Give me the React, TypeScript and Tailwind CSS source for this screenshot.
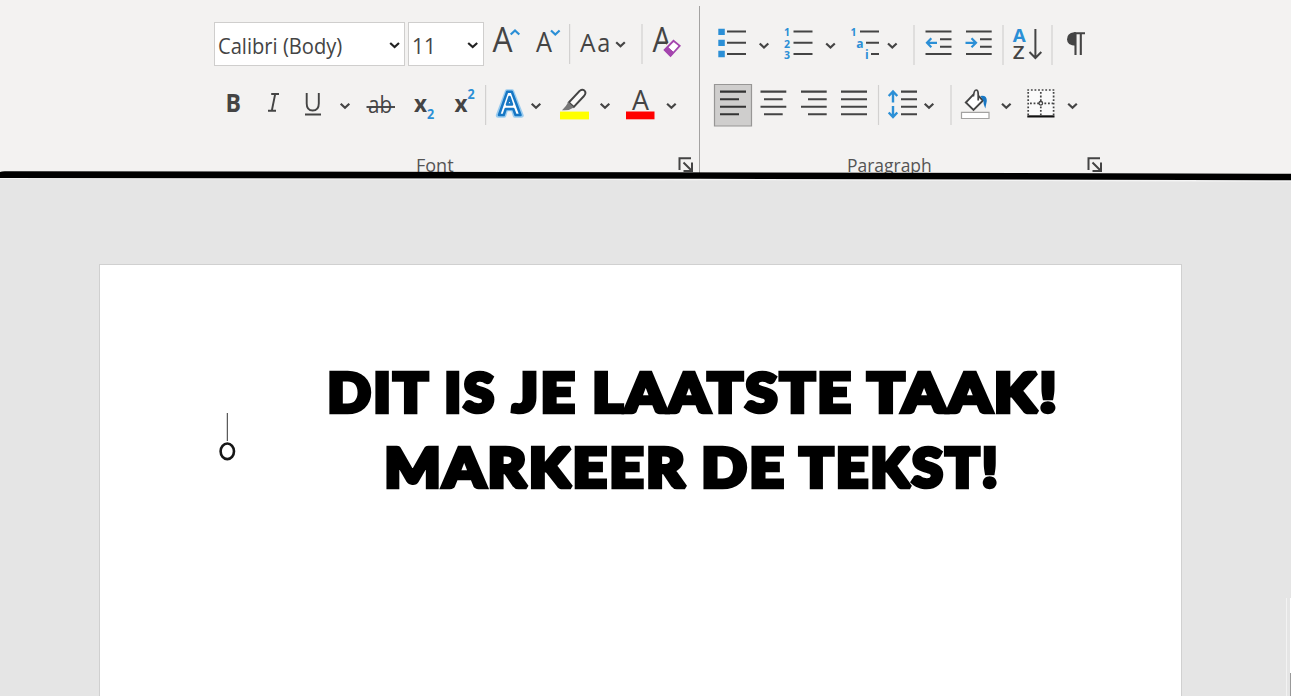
import type { ReactNode } from 'react';

const INK = '#444444';
const BLUE = '#2b8fd6';

// Each glyph is drawn in ribbon coordinates; x/w select its slice of the row.
function Glyph({ x, w, y, children }: { x: number; w: number; y: number; children?: ReactNode }) {
  return (
    <svg
      width={w}
      height={44}
      viewBox={`${x} ${y} ${w} 44`}
      className="block shrink-0 overflow-visible"
      fill="none"
      stroke={INK}
      strokeWidth={1.9}
      fontFamily="'Open Sans', 'Noto Sans', sans-serif"
    >
      {children}
    </svg>
  );
}

function Chevron({ x, y, color = INK, up = false }: { x: number; y: number; color?: string; up?: boolean }) {
  const d = up ? -2 : 2;
  return <path d={`M${x - 4.3} ${y - d}L${x} ${y + d}L${x + 4.3} ${y - d}`} stroke={color} strokeWidth={2.2} />;
}

function T({ x, y, s, l, c = INK, weight = 400, italic = false, children }: {
  x: number; y: number; s: number; l?: number; c?: string; weight?: number; italic?: boolean; children: string;
}) {
  return (
    <text x={x} y={y} fontSize={s} fill={c} stroke="none" fontWeight={weight} fontStyle={italic ? 'italic' : 'normal'}
      textLength={l} lengthAdjust="spacingAndGlyphs">
      {children}
    </text>
  );
}

function Sep({ x, y }: { x: number; y: number }) {
  return <path d={`M${x} ${y}v40`} stroke="#d2d1d0" strokeWidth={1.2} />;
}

function Lines({ rows }: { rows: [number, number, number][] }) {
  return <path d={rows.map(([a, b, y]) => `M${a} ${y}H${b}`).join('')} strokeWidth={2.1} />;
}

function Launcher() {
  return (
    <svg width="16" height="16" viewBox="0 0 16 16" fill="none" stroke={INK} strokeWidth="2" className="block shrink-0">
      <path d="M1.5 13V1.2H13M5.5 5.5L13 13M14 5.5V14H5.5" />
    </svg>
  );
}

function FontGroup() {
  return (
    <section className="flex h-full w-[485px] shrink-0 flex-col pt-[22px]">
      <div className="flex h-11">
        <div className="flex w-[191px] items-center justify-between border border-[#cfcecd] bg-white pt-[2px] pl-[3px] text-[#444]">
          <span className="origin-left scale-x-[0.915] whitespace-nowrap text-[22px] leading-none">Calibri (Body)</span>
          <svg width="20" height="20" viewBox="0 0 20 20" fill="none" className="-ml-6 shrink-0">
            <path d="M6.2 8L10.6 12L15 8" stroke="#222" strokeWidth="2.2" />
          </svg>
        </div>
        <div className="ml-[3px] flex w-[76px] items-center justify-between border border-[#cfcecd] bg-white pt-[2px] pl-[3px] text-[#444]">
          <span className="origin-left scale-x-95 text-[22px] leading-none">11</span>
          <svg width="20" height="20" viewBox="0 0 20 20" fill="none" className="shrink-0">
            <path d="M5.2 8L9.7 12L14.2 8" stroke="#222" strokeWidth="2.2" />
          </svg>
        </div>
        <Glyph x={484} w={44} y={22}>
          <T x={492.5} y={52} s={34} l={20}>A</T>
          <Chevron x={515} y={32.5} color={BLUE} up />
        </Glyph>
        <Glyph x={528} w={38} y={22}>
          <T x={536} y={52} s={27} l={16}>A</T>
          <Chevron x={555.3} y={32.5} color={BLUE} />
        </Glyph>
        <Glyph x={566} w={7} y={22}><Sep x={569.6} y={24} /></Glyph>
        <Glyph x={573} w={65} y={22}>
          <T x={580} y={52} s={26} l={15.5}>A</T>
          <T x={597.3} y={52} s={25} l={13}>a</T>
          <Chevron x={620.5} y={44.3} />
        </Glyph>
        <Glyph x={638} w={8} y={22}><Sep x={642} y={24} /></Glyph>
        <Glyph x={646} w={44} y={22}>
          <T x={652.5} y={52} s={34} l={19}>A</T>
          <path d="M664.5 49.5L673.5 40.5L680 46L670.5 56.5Z" fill="#f8f3f9" stroke="#f3f2f1" strokeWidth={4} />
          <path d="M664.6 50L673.5 40.8L679.7 45.8L670.5 56Z" fill="#fff" stroke="#a445ae" strokeWidth={1.8} />
          <path d="M664.6 50L667.6 47L673.5 52.4L670.5 56Z" fill="#a445ae" stroke="#a445ae" strokeWidth={1} />
        </Glyph>
      </div>

      <div className="mt-4 flex h-11">
        <Glyph x={214} w={40} y={82}><T x={225.5} y={111.5} s={25.5} l={15.5} weight={700}>B</T></Glyph>
        <Glyph x={254} w={38} y={82}>
          <path d="M271.2 94H279M268 110.8H276M275.2 94L271.8 110.8" />
        </Glyph>
        <Glyph x={292} w={66} y={82}>
          <path d="M306.7 93V103.5Q306.7 110.5 312.7 110.5Q318.8 110.5 318.8 103.5V93M305 114.5H321" />
          <Chevron x={345} y={105.8} />
        </Glyph>
        <Glyph x={358} w={44} y={82}>
          <T x={368} y={113} s={23} l={24}>ab</T>
          <path d="M366.5 107H395" />
        </Glyph>
        <Glyph x={402} w={42} y={82}>
          <T x={414} y={111.5} s={24} l={13} weight={700}>x</T>
          <T x={427} y={119} s={14} l={7.2} weight={700} c={BLUE}>2</T>
        </Glyph>
        <Glyph x={444} w={38} y={82}>
          <T x={454.5} y={111.5} s={24} l={13} weight={700}>x</T>
          <T x={467.5} y={99} s={14} l={7.2} weight={700} c={BLUE}>2</T>
        </Glyph>
        <Glyph x={482} w={8} y={82}><Sep x={485.6} y={85} /></Glyph>
        <Glyph x={490} w={60} y={82}>
          <g strokeLinejoin="round">
            <path d="M498 115.5L507 91.5H512L521.5 115.5H515L513 109H506L504 115.5Z" stroke="#9accef" strokeWidth={4.5} />
            <path d="M499 115L507.2 91.7H511.8L520.5 115H515.5L513.3 109H505.7L503.7 115ZM507 104.5H512L509.5 97Z" fill="#fff" stroke="#1777c4" strokeWidth={2.5} />
          </g>
          <Chevron x={536} y={105.8} />
        </Glyph>
        <Glyph x={550} w={68} y={82}>
          <path d="M560 111.6H589V119.4H560Z" fill="#ffff00" stroke="none" />
          <path d="M568.8 102.5L579.5 91Q583 88.5 585 91.2Q586.3 93.2 584 96L573.8 107Z" fill="#faf9f8" />
          <path d="M568.3 102L573.8 107.5Q569 111 562 110.2Q566.5 106 568.3 102Z" fill="#777" stroke="none" />
          <Chevron x={605} y={105.8} />
        </Glyph>
        <Glyph x={618} w={68} y={82}>
          <T x={632} y={109.5} s={28} l={17}>A</T>
          <path d="M626 111.5H654.5V119.3H626Z" fill="#ff0000" stroke="none" />
          <Chevron x={671.4} y={105.8} />
        </Glyph>
      </div>

      <div className="mt-[29px] flex h-5">
        <span className="ml-[202px] whitespace-nowrap text-[18px] leading-5 text-[#555]">Font</span>
        <span className="mr-[5px] ml-auto pt-[2px]"><Launcher /></span>
      </div>
    </section>
  );
}

function ParagraphGroup() {
  return (
    <section className="flex h-full w-[410px] shrink-0 flex-col pt-[22px]">
      <div className="flex h-11">
        <Glyph x={700} w={76} y={22}>
          <path d="M718.3 28.7h6.5v6.4h-6.5ZM718.3 39.7h6.5v6.4h-6.5ZM718.3 50.8h6.5v6.4h-6.5Z" fill={BLUE} stroke="none" />
          <Lines rows={[[727, 746, 31.5], [727, 746, 42.7], [727, 746, 54]]} />
          <Chevron x={764} y={45.5} />
        </Glyph>
        <Glyph x={776} w={66} y={22}>
          <T x={784} y={36} s={10.5} weight={700} c={BLUE}>1</T>
          <T x={784} y={47.8} s={10.5} weight={700} c={BLUE}>2</T>
          <T x={784} y={59} s={10.5} weight={700} c={BLUE}>3</T>
          <Lines rows={[[793.5, 812.5, 31.5], [793.5, 812.5, 42.7], [793.5, 812.5, 54]]} />
          <Chevron x={830.5} y={45.5} />
        </Glyph>
        <Glyph x={842} w={66} y={22}>
          <T x={850.5} y={36} s={10.5} weight={700} c={BLUE}>1</T>
          <T x={856.3} y={47.5} s={12} weight={700} c={BLUE}>a</T>
          <T x={865} y={58.5} s={12} weight={700} c={BLUE}>i</T>
          <Lines rows={[[860, 879, 31.5], [866, 879, 42.7], [871, 879, 54]]} />
          <Chevron x={892.3} y={45.5} />
        </Glyph>
        <Glyph x={908} w={12} y={22}><Sep x={914} y={25} /></Glyph>
        <Glyph x={920} w={38} y={22}>
          <Lines rows={[[925.5, 951.5, 31.5], [940, 951.5, 39.3], [940, 951.5, 46.7], [925.5, 951.5, 54]]} />
          <path d="M937 42.8H927M931.3 38.3L927 42.8L931.3 47.3" stroke={BLUE} strokeWidth={2.2} />
        </Glyph>
        <Glyph x={958} w={40} y={22}>
          <Lines rows={[[966, 991.7, 31.5], [980, 991.7, 39.3], [980, 991.7, 46.7], [966, 991.7, 54]]} />
          <path d="M965.5 42.8H976M971.5 38.3L976 42.8L971.5 47.3" stroke={BLUE} strokeWidth={2.2} />
        </Glyph>
        <Glyph x={998} w={10} y={22}><Sep x={1003} y={25} /></Glyph>
        <Glyph x={1008} w={38} y={22}>
          <T x={1012.8} y={42} s={18} l={13} weight={700} c={BLUE}>A</T>
          <T x={1012.8} y={59} s={18.5} l={11.8} weight={600}>Z</T>
          <path d="M1035.4 29V58M1029.5 52L1035.4 58L1041.3 52" strokeWidth={2} />
        </Glyph>
        <Glyph x={1046} w={12} y={22}><Sep x={1052} y={25} /></Glyph>
        <Glyph x={1058} w={40} y={22}>
          <path d="M1076 32.2H1074Q1067 33 1067 39.2Q1067 45.7 1076 45.7Z" fill={INK} stroke="none" />
          <path d="M1074 33.2H1085M1075.5 33V55M1080.8 33V55" strokeWidth={2.1} />
        </Glyph>
      </div>

      <div className="mt-4 flex h-11">
        <Glyph x={700} w={54} y={82}>
          <path d="M714.5 84.5H751.5V126H714.5Z" fill="#cfcecd" stroke="#979695" strokeWidth={1.2} />
          <path d="M720 91.6H746M720 99.3H739M720 106.8H746M720 114.3H739" stroke="#333" strokeWidth={2.1} />
        </Glyph>
        <Glyph x={754} w={40} y={82}>
          <Lines rows={[[760.5, 786.3, 91.6], [764, 782.7, 99.3], [760.5, 786.3, 106.8], [764, 782.7, 114.3]]} />
        </Glyph>
        <Glyph x={794} w={40} y={82}>
          <Lines rows={[[801, 826.7, 91.6], [808, 826.7, 99.3], [801, 826.7, 106.8], [808, 826.7, 114.3]]} />
        </Glyph>
        <Glyph x={834} w={40} y={82}>
          <Lines rows={[[841, 867, 91.6], [841, 867, 99.3], [841, 867, 106.8], [841, 867, 114.3]]} />
        </Glyph>
        <Glyph x={874} w={8} y={82}><Sep x={878.5} y={85} /></Glyph>
        <Glyph x={882} w={64} y={82}>
          <path d="M893 102.5V92M888.7 96L893 91.5L897.3 96M893 106V116.5M888.7 112.5L893 117L897.3 112.5" stroke={BLUE} strokeWidth={2.4} />
          <Lines rows={[[901, 917, 91.6], [901, 917, 99.3], [901, 917, 106.8], [901, 917, 114.3]]} />
          <Chevron x={929} y={105.8} />
        </Glyph>
        <Glyph x={946} w={10} y={82}><Sep x={951} y={85} /></Glyph>
        <Glyph x={956} w={64} y={82}>
          <path d="M961.5 112.3H989V118.5H961.5Z" fill="#fff" stroke="#a3a2a1" strokeWidth={1.2} />
          <path d="M973.8 94.2L965.8 102.5L973.5 110L983 100.5L978.5 96" fill="#fff" />
          <path d="M973.4 96.5Q974 90 976.2 90Q978.2 90 978.2 94V100.5" strokeWidth={1.7} />
          <path d="M980.5 96Q987 95 986.8 101L985.3 108.5Q983 104 983.5 101Z" fill="#1777c4" stroke="none" />
          <Chevron x={1006.3} y={105.8} />
        </Glyph>
        <Glyph x={1020} w={70} y={82}>
          <path d="M1028 89.5H1054V116H1028Z" fill="#fafafa" stroke="none" />
          <path d="M1027.3 90H1054.5M1028.2 92V115M1053.6 92V115M1040.8 92V115M1030 103.3H1053" strokeWidth={1.7} strokeDasharray="1.8 1.8" />
          <circle cx={1040.8} cy={103.3} r={1.8} fill="#fafafa" strokeWidth={1.3} />
          <path d="M1027.3 116.4H1054.5" stroke="#111" strokeWidth={2.2} />
          <Chevron x={1072.5} y={105.8} />
        </Glyph>
      </div>

      <div className="mt-[29px] flex h-5">
        <span className="ml-[147px] origin-left scale-x-[0.97] whitespace-nowrap text-[18px] leading-5 text-[#555]">Paragraph</span>
        <span className="mr-[7px] ml-auto pt-[2px]"><Launcher /></span>
      </div>
    </section>
  );
}

function Word({ l, text }: { l: number; text: string }) {
  return (
    <svg width={l} height={64} viewBox={`0 0 ${l} 64`} className="block shrink-0 overflow-visible">
      <text x={-0.5} y={49.8} fontFamily="Lato, 'Open Sans', sans-serif" fontWeight={900} fontSize={53.5} fill="#000"
        stroke="#000" strokeWidth={4.6} strokeMiterlimit={2} letterSpacing={2.6} textLength={l + 3} lengthAdjust="spacingAndGlyphs">{text}</text>
    </svg>
  );
}

export default function App() {
  return (
    <div className="flex h-[696px] w-[1291px] flex-col overflow-hidden bg-[#e5e5e5] font-['Open_Sans','Noto_Sans',sans-serif]">
      <header className="relative flex h-[176px] shrink-0 bg-[#f3f2f1] pl-[214px]">
        <FontGroup />
        <div className="mt-1.5 w-px shrink-0 bg-[#a3a2a1]" />
        <ParagraphGroup />
        <svg className="absolute top-[168px] left-0" width="1291" height="16" viewBox="0 168 1291 16">
          <path d="M0 176L1291 178V181.8L700 180.2L0 179Z" fill="#f4f4f4" />
          <path d="M0 172Q2 171 6 171.2L650 172.2L1291 173.7V180.2L700 178.8L0 178Z" fill="#000" />
        </svg>
      </header>

      <div className="flex min-h-0 flex-1">
        <main className="mt-[88px] ml-[99px] flex w-[1083px] shrink-0 border border-b-0 border-[#d0d0d0] bg-white">
          <svg width="24" height="52" viewBox="216 412 24 52" fill="none" className="mt-[147px] ml-[116px] block shrink-0">
            <path d="M227.3 413V441" stroke="#333" strokeWidth="1" />
            <ellipse cx="227.3" cy="451.3" rx="6.7" ry="7.8" stroke="#161616" strokeWidth="2.6" />
          </svg>
          <h1 className="mt-[97px] ml-[88px] flex w-[729px] flex-col">
            <span className="flex h-[75px]">
              <Word l={100} text="DIT" />
              <span className="ml-[17px]"><Word l={49} text="IS" /></span>
              <span className="ml-[19px]"><Word l={62} text="JE" /></span>
              <span className="ml-[18px]"><Word l={258} text="LAATSTE" /></span>
              <span className="ml-[17px]"><Word l={189} text="TAAK!" /></span>
            </span>
            <span className="flex h-[75px] pl-[57px]">
              <Word l={300} text="MARKEER" />
              <span className="ml-[17px]"><Word l={82} text="DE" /></span>
              <span className="ml-[16px]"><Word l={198} text="TEKST!" /></span>
            </span>
          </h1>
        </main>
        <div className="mt-[422px] ml-auto flex w-[5px] border-l border-[#f3f3f3]">
          <div className="ml-auto flex w-px flex-col">
            <div className="h-[75px] bg-white" />
            <div className="flex-1 bg-[#999]" />
          </div>
        </div>
      </div>
    </div>
  );
}
